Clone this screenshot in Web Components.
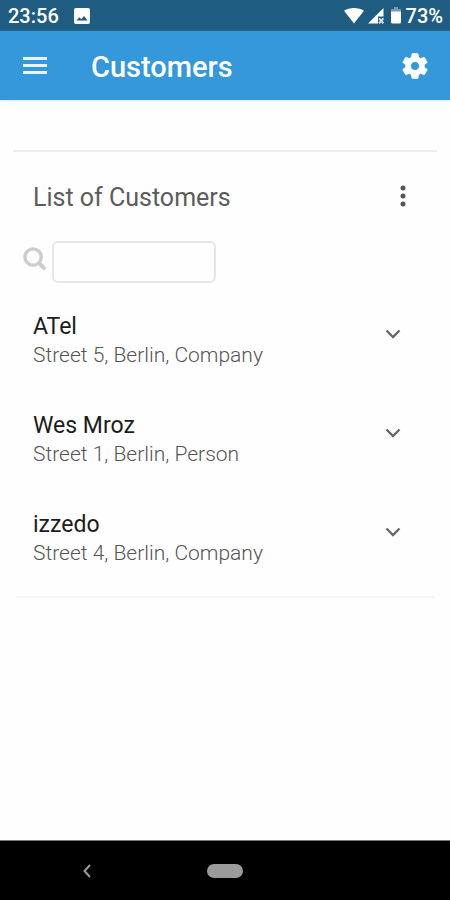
<!DOCTYPE html>
<html lang="en">
<head>
<meta charset="utf-8">
<meta name="viewport" content="width=device-width, initial-scale=1">
<title>Customers</title>
<style>
  body { margin: 0; background: #fefefe; font-family: Roboto, "Liberation Sans", sans-serif; color: #212121; }
</style>
</head>
<body>
<phone-screen>
  <status-bar slot="top" time="23:56" battery="73%"></status-bar>
  <app-bar slot="top">Customers</app-bar>
  <customer-list heading="List of Customers">
    <customer-row name="ATel">Street 5, Berlin, Company</customer-row>
    <customer-row name="Wes Mroz">Street 1, Berlin, Person</customer-row>
    <customer-row name="izzedo">Street 4, Berlin, Company</customer-row>
  </customer-list>
  <nav-bar slot="bottom"></nav-bar>
</phone-screen>
<script>
const reset = `<style>
  *, *::before, *::after { box-sizing: border-box; }
  :host { box-sizing: border-box; }
  button { display: grid; place-items: center; margin: 0; padding: 0; border: 0; background: none; color: inherit; font: inherit; cursor: pointer; }
  svg { display: block; }
</style>`;

class BaseElement extends HTMLElement {
  connectedCallback() {
    if (this.shadowRoot) return;
    this.attachShadow({ mode: "open" }).innerHTML = reset + this.template();
  }
}

customElements.define("phone-screen", class extends BaseElement {
  template() {
    return `<style>
      :host { display: flex; flex-direction: column; min-height: 100vh; }
      main { flex: 1; padding: 50px 13px 0; }
    </style>
    <slot name="top"></slot>
    <main><slot></slot></main>
    <slot name="bottom"></slot>`;
  }
});

customElements.define("status-bar", class extends BaseElement {
  template() {
    return `<style>
      :host { display: flex; align-items: center; height: 31px; padding: 0 7px 0 8px; background: #1f5c82; color: #fff; font-size: 20px; font-weight: 500; line-height: 24px; }
      .picture { margin-left: 15px; }
      .icons { display: flex; align-items: center; gap: 4px; margin-left: auto; }
      .battery { margin-left: 3px; }
    </style>
    <span>${this.getAttribute("time")}</span>
    <svg class="picture" width="16" height="16" viewBox="0 0 16 16" fill="#fff" aria-hidden="true">
      <path fill-rule="evenodd" d="M2 0h12a2 2 0 0 1 2 2v12a2 2 0 0 1-2 2H2a2 2 0 0 1-2-2V2a2 2 0 0 1 2-2zM2.500 12.500h11L10 8 7.300 11.300 5.300 9.200z"/>
    </svg>
    <span class="icons">
      <svg width="20" height="16" viewBox="0 0 20 16" fill="#fff" aria-hidden="true"><path d="M0 2.800C5.500-.9 14.500-.9 20 2.800L10 15.500z"/></svg>
      <svg width="16" height="16" viewBox="0 0 16 16" aria-hidden="true">
        <path fill="#fff" d="M0 15.500 15.500 0v8.500H10v7z"/>
        <path stroke="#d5e0e8" stroke-width="2" d="m11 10.300 4.400 5M15.400 10.300l-4.400 5"/>
      </svg>
      <svg class="battery" width="11" height="17" viewBox="4 0 11 17" aria-hidden="true">
        <path fill="#7899af" d="M7 0h4v2h3v4H4V2h3z"/><path fill="#fff" d="M4 4.500h10V15a1.500 1.500 0 0 1-1.500 1.500h-7A1.500 1.500 0 0 1 4 15z"/>
      </svg>
      <span>${this.getAttribute("battery")}</span>
    </span>`;
  }
});

customElements.define("app-bar", class extends BaseElement {
  template() {
    return `<style>
      :host { display: flex; align-items: center; height: 69px; padding: 0 15px; background: #3498db; color: #fff; box-shadow: 0 1px 2px #d6eaf6; }
      button { width: 40px; height: 40px; }
      h1 { flex: 1; margin: 2px 0 0 36px; font-size: 29px; font-weight: 500; line-height: 36px; }
    </style>
    <button type="button" aria-label="Menu">
      <svg width="24" height="18" viewBox="0 0 24 18" fill="#e9f4fb"><path d="M0 0h24v3H0zM0 7h24v3H0zM0 14h24v3H0z"/></svg>
    </button>
    <h1><slot></slot></h1>
    <button type="button" aria-label="Settings">
      <svg width="30" height="30" viewBox="0 0 24 24" fill="#fff" stroke="#fff" stroke-width=".5"><path d="M19.430 12.980c.04-.32.07-.64.07-.98s-.03-.66-.07-.98l2.110-1.650c.19-.15.24-.42.12-.64l-2-3.460c-.12-.22-.39-.3-.61-.22l-2.490 1c-.52-.4-1.080-.73-1.690-.98l-.38-2.650C14.460 2.180 14.250 2 14 2h-4c-.25 0-.46.18-.49.42l-.38 2.650c-.61.25-1.170.59-1.690.98l-2.490-1c-.23-.09-.49 0-.61.22l-2 3.460c-.13.22-.07.49.12.64l2.110 1.650c-.04.32-.07.65-.07.98s.03.66.07.98l-2.110 1.650c-.19.15-.24.42-.12.64l2 3.460c.12.22.39.3.61.22l2.490-1c.52.4 1.080.73 1.690.98l.38 2.650c.03.24.24.42.49.42h4c.25 0 .46-.18.49-.42l.38-2.650c.61-.25 1.170-.59 1.690-.98l2.490 1c.23.09.49 0 .61-.22l2-3.460c.12-.22.07-.49-.12-.64zM12 15.500A3.500 3.500 0 1 1 12 8.500a3.500 3.500 0 0 1 0 7z"/></svg>
    </button>`;
  }
});

customElements.define("customer-list", class extends BaseElement {
  template() {
    return `<style>
      :host { display: block; border-top: 2px solid #ededed; }
      header { display: flex; align-items: flex-start; justify-content: space-between; padding: 24px 14px 0 20px; }
      h2 { margin: 0; padding-top: 2px; font-size: 25px; font-weight: 400; line-height: 40px; color: #5c5c5c; }
      header button { width: 40px; height: 40px; }
      .search { display: flex; align-items: center; gap: 5px; padding: 23px 0 0 10px; }
      label { display: block; padding-bottom: 6px; }
      input { width: 164px; height: 42px; margin: 0; padding: 0 8px; border: 2px solid #e6e6e6; border-radius: 6px; background: #fefefe; font: inherit; font-size: 20px; outline: 0; }
      .rows { margin: 0 3px; padding: 29px 17px 30px; display: grid; gap: 43px; border-bottom: 2px solid #f5f5f5; }
    </style>
    <header>
      <h2>${this.getAttribute("heading")}</h2>
      <button type="button" aria-label="More options">
        <svg width="6" height="22" viewBox="0 0 6 22" fill="#555"><circle cx="3" cy="3" r="2.500"/><circle cx="3" cy="11" r="2.500"/><circle cx="3" cy="19" r="2.500"/></svg>
      </button>
    </header>
    <div class="search">
      <label for="query" aria-label="Search customers">
        <svg width="24" height="24" viewBox="0 0 25 25" fill="none" stroke="#cdcdcd"><circle cx="10.500" cy="10.500" r="8.500" stroke-width="3.500"/><path d="m16.500 16.500 6.500 6.500" stroke-width="4"/></svg>
      </label>
      <input id="query" type="text">
    </div>
    <div class="rows"><slot></slot></div>`;
  }
});

customElements.define("customer-row", class extends BaseElement {
  template() {
    return `<style>
      :host { display: flex; align-items: flex-start; justify-content: space-between; }
      .name { font-size: 23px; line-height: 30px; color: #1c1c1c; }
      .detail { font-size: 21px; font-weight: 300; line-height: 26px; color: #555; }
      button { width: 40px; height: 40px; margin: 2px 4px 0 0; }
    </style>
    <div>
      <div class="name">${this.getAttribute("name")}</div>
      <div class="detail"><slot></slot></div>
    </div>
    <button type="button" aria-label="Expand ${this.getAttribute("name")}">
      <svg width="16" height="10" viewBox="0 0 16 10" fill="none" stroke="#666" stroke-width="2.300"><path d="m1.500 1.500 6.500 6.500 6.500-6.500"/></svg>
    </button>`;
  }
});

customElements.define("nav-bar", class extends BaseElement {
  template() {
    return `<style>
      :host { display: grid; grid-template-columns: 1fr auto 1fr; align-items: center; height: 60px; background: #000; border-top: 1px solid #777; }
      .back { justify-self: center; width: 40px; height: 40px; margin-right: 34px; }
      .home { width: 36px; height: 14px; border-radius: 7px; background: #9b9b9b; }
    </style>
    <button class="back" type="button" aria-label="Back">
      <svg width="8" height="14" viewBox="0 0 8 14" fill="none" stroke="#9b9b9b" stroke-width="2"><path d="M7 1 1.500 7 7 13"/></svg>
    </button>
    <button class="home" type="button" aria-label="Home"></button>`;
  }
});
</script>
</body>
</html>
